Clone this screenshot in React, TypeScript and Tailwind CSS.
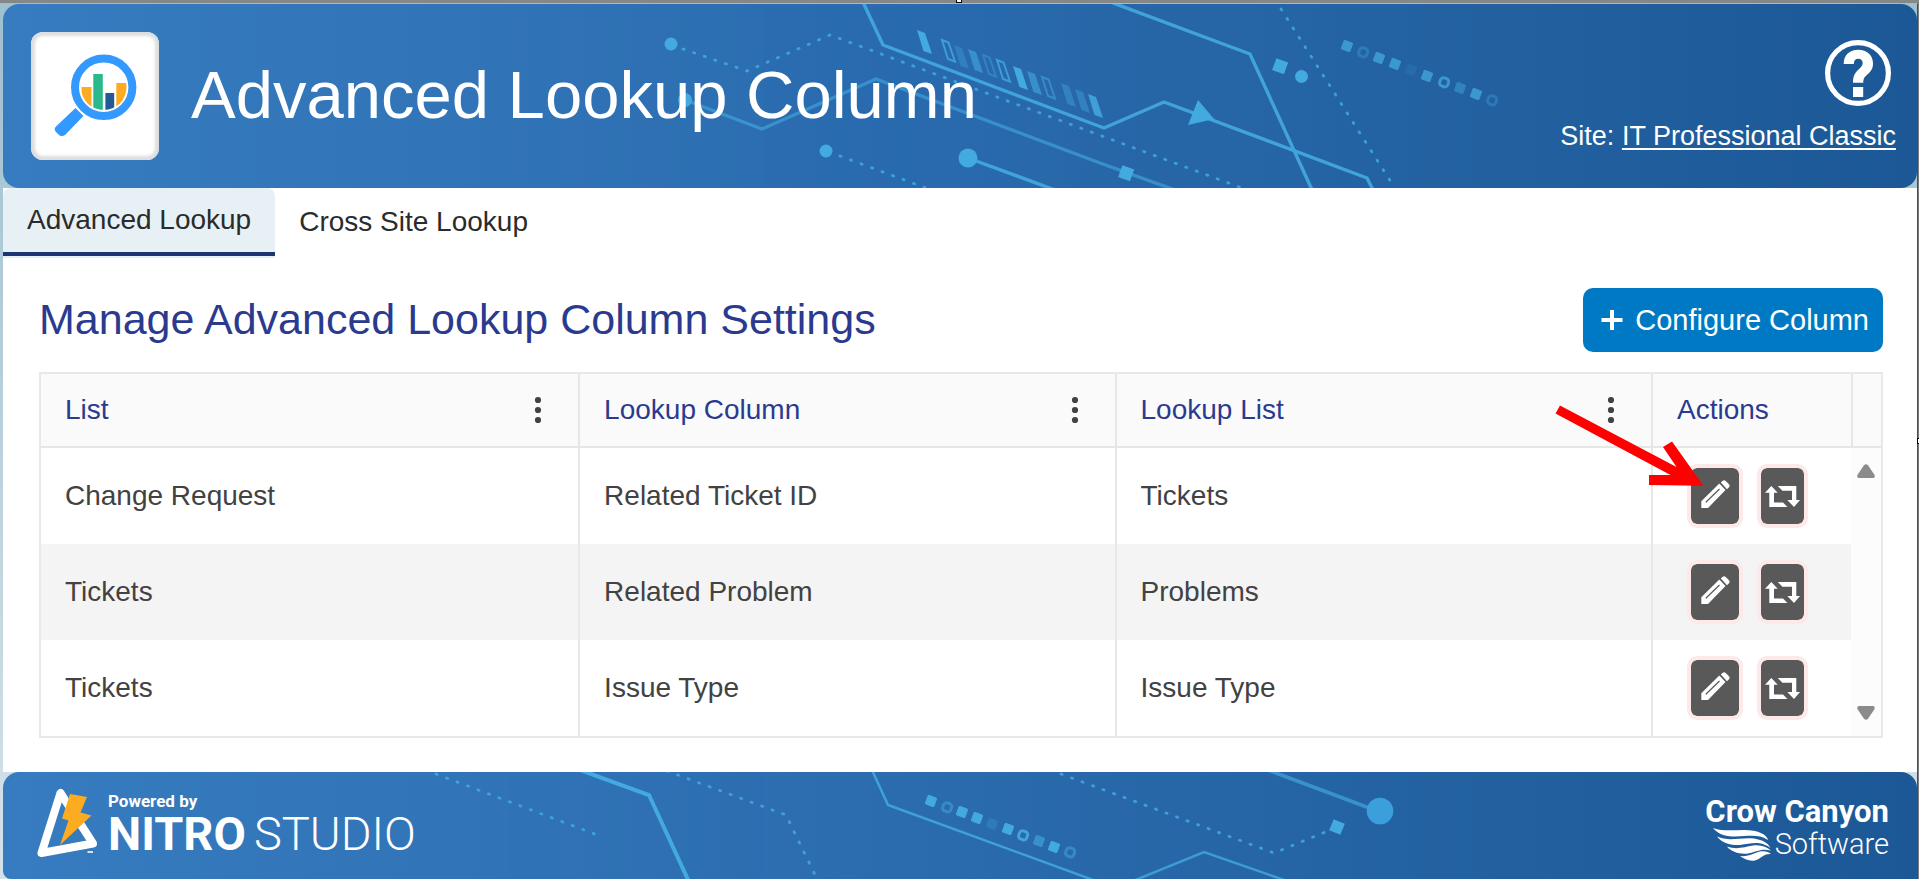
import React from "react";

const CYAN = "#43aadf";

type Mark = { x: number; y: number; hollow?: boolean; opacity: number };

const headerMarks: Mark[] = [
  { x: 1347, y: 46, opacity: 0.75 },
  { x: 1363, y: 52, hollow: true, opacity: 0.35 },
  { x: 1379, y: 58, opacity: 0.75 },
  { x: 1395, y: 64, opacity: 0.75 },
  { x: 1411, y: 70, opacity: 0.12 },
  { x: 1427, y: 76, opacity: 0.75 },
  { x: 1444, y: 82, hollow: true, opacity: 0.75 },
  { x: 1460, y: 88, opacity: 0.45 },
  { x: 1476, y: 94, opacity: 0.75 },
  { x: 1492, y: 100, hollow: true, opacity: 0.35 },
];

const footerMarks: Mark[] = [
  { x: 931, y: 801, opacity: 1 },
  { x: 947, y: 807, hollow: true, opacity: 0.5 },
  { x: 962, y: 812, opacity: 1 },
  { x: 977, y: 818, opacity: 1 },
  { x: 992, y: 824, opacity: 0.25 },
  { x: 1008, y: 829, opacity: 1 },
  { x: 1023, y: 835, hollow: true, opacity: 0.9 },
  { x: 1039, y: 841, opacity: 0.6 },
  { x: 1054, y: 847, opacity: 1 },
  { x: 1070, y: 852, hollow: true, opacity: 0.5 },
];

const slats: Mark[] = [
  { x: 917, y: 30, opacity: 1 },
  { x: 942, y: 40, hollow: true, opacity: 0.8 },
  { x: 954, y: 45, opacity: 0.35 },
  { x: 968, y: 49, opacity: 0.6 },
  { x: 983, y: 55, hollow: true, opacity: 0.4 },
  { x: 997, y: 60, hollow: true, opacity: 0.8 },
  { x: 1013, y: 66, opacity: 1 },
  { x: 1027, y: 71, opacity: 0.6 },
  { x: 1042, y: 77, hollow: true, opacity: 0.55 },
  { x: 1061, y: 83, opacity: 0.4 },
  { x: 1075, y: 89, opacity: 0.4 },
  { x: 1088, y: 94, opacity: 0.85 },
];

function Marks({ marks }: { marks: Mark[] }) {
  return (
    <>
      {marks.map((m) =>
        m.hollow ? (
          <rect key={m.x} x={m.x - 4} y={m.y - 4} width="8.5" height="8.5" rx="3" fill="none" stroke={CYAN} strokeWidth="3" opacity={m.opacity} transform={`rotate(20 ${m.x} ${m.y})`} />
        ) : (
          <rect key={m.x} x={m.x - 4.5} y={m.y - 4.5} width="9" height="9" rx="1" fill={CYAN} opacity={m.opacity} transform={`rotate(20 ${m.x} ${m.y})`} />
        )
      )}
    </>
  );
}

function HeaderArt() {
  return (
    <svg className="absolute inset-0 h-full w-full" viewBox="3 4 1914 184" preserveAspectRatio="xMidYMid slice" aria-hidden="true" fill="none" stroke={CYAN}>
      <g strokeWidth="2.8" strokeDasharray="1.2 10" strokeLinecap="round" opacity="0.85">
        <path d="M683 49 L747 71 L830 35 L1242 188" />
        <path d="M840 156 L926 188" />
        <path d="M1281 9 L1391 182" />
      </g>
      <g strokeWidth="3.4" opacity="0.92">
        <path d="M862 0 L883 45 L1104 128 L1164 102 L1367 178 L1373 190" />
        <path d="M1105 0 L1250 54 L1313 192" />
        <path d="M968 158 L1055 190" />
        <path d="M685 100 L762 129 L876 79 L1100 163 L1175 190" opacity="0.65" />
      </g>
      <g fill={CYAN} stroke="none">
        <circle cx="671" cy="44" r="6.5" />
        <circle cx="685" cy="100" r="7" />
        <circle cx="826" cy="151" r="6.5" />
        <circle cx="968" cy="158" r="9.5" />
        <circle cx="1301.5" cy="76.5" r="6.5" />
        <path d="M1198 100 L1214 119 L1188 125 Z" />
        <rect x="1274" y="60" width="12.5" height="12.5" transform="rotate(20 1280 66)" />
        <rect x="1120" y="167" width="12.5" height="12.5" transform="rotate(20 1126 173)" />
        {slats.map((s) =>
          s.hollow ? (
            <path key={s.x} d={`M${s.x} ${s.y} l6.500 2.500 l6.500 19 l-7 -2.500 Z`} opacity={s.opacity} fill="none" stroke={CYAN} strokeWidth="2" />
          ) : (
            <path key={s.x} d={`M${s.x} ${s.y} l8 3 l7 21 l-8.500 -3 Z`} opacity={s.opacity} />
          )
        )}
      </g>
      <Marks marks={headerMarks} />
    </svg>
  );
}

function FooterArt() {
  return (
    <svg className="absolute inset-0 h-full w-full" viewBox="3 772 1914 107" preserveAspectRatio="xMidYMid slice" aria-hidden="true" fill="none" stroke={CYAN}>
      <g strokeWidth="2.8" strokeDasharray="1.2 10" strokeLinecap="round" opacity="0.85">
        <path d="M436 774 L600 836" />
        <path d="M667 771 L786 815 L818 881" />
        <path d="M1061 774 L1274 853 L1330 830" />
      </g>
      <path d="M580 770 L649 795 L690 884" strokeWidth="4" />
      <path d="M872 770 L888 805 L1096 881" strokeWidth="2.5" opacity="0.85" />
      <path d="M1133 881 L1204 852 L1287 881" strokeWidth="2.5" opacity="0.8" />
      <path d="M1268 770 L1380 812" strokeWidth="3.8" opacity="0.65" />
      <circle cx="1380" cy="811" r="13.3" fill="#3b9fdb" stroke="none" />
      <rect x="1331" y="821" width="12" height="12" fill={CYAN} stroke="none" transform="rotate(22 1337 827)" />
      <Marks marks={footerMarks} />
    </svg>
  );
}

function MagnifierIcon() {
  return (
    <svg className="size-32" viewBox="31 32 128 128" aria-hidden="true">
      <defs>
        <clipPath id="lens">
          <circle cx="103.7" cy="87.3" r="22.8" />
        </clipPath>
      </defs>
      <g clipPath="url(#lens)">
        <rect x="81.5" y="87" width="10" height="24" fill="#fdab20" />
        <rect x="93.3" y="74" width="9.500" height="40" fill="#2bb88c" />
        <rect x="105.4" y="93" width="8.800" height="20" fill="#225a97" />
        <rect x="116.3" y="83" width="11" height="28" fill="#fdab20" />
      </g>
      <circle cx="103.7" cy="87.3" r="28.7" fill="none" stroke="#3399ff" strokeWidth="8" />
      <path d="M75.500 108 L83.500 116 L65.500 134.500 Q64 136 61.500 136 Q60 136 58.500 134.500 L56 132 Q54.500 130.500 54.700 128.500 Q54.800 127.500 56.500 126 Z" fill="#3399ff" />
    </svg>
  );
}

function HelpIcon() {
  return (
    <svg className="size-[66px]" viewBox="0 0 66 66" fill="none" aria-hidden="true">
      <circle cx="33" cy="33" r="30.400" stroke="#fff" strokeWidth="5.200" />
      <path
        d="M18.700 24 C18.700 15 24.500 9.700 33.200 9.700 C42 9.700 48 15 48 23.500 C48 29 45.500 31.800 42.300 34.500 C39.500 37 38.300 38.500 38.300 42.700 H28 C28 36.500 29.500 33.500 33 30 C35.800 27.300 37.700 26 37.700 23 C37.700 20.300 36 18.700 33.300 18.700 C30.500 18.700 28.800 20.500 28.800 24 Z"
        fill="#fff"
      />
      <rect x="28" y="47" width="10.200" height="10" fill="#fff" />
    </svg>
  );
}

function PencilIcon() {
  return (
    <svg className="h-7 w-[29px]" viewBox="0 0 29 28" aria-hidden="true">
      <path d="M0.300 28 V21.200 L18.300 3.500 L24.500 10 L7 28 Z" fill="#fff" />
      <path d="M19.800 2.500 L21.800 0.700 Q23 -0.300 24.500 0.700 L28 4.300 Q29.200 6 28 7.200 L26 9.200 Z" fill="#fff" />
      <path d="M4.800 22.300 L18.500 9" stroke="#595959" strokeWidth="1.200" />
    </svg>
  );
}

function LoopIcon() {
  return (
    <svg className="h-[21px] w-[35px] shrink-0" viewBox="0 0 35 21" fill="#fff" aria-hidden="true">
      <path d="M6.300 0 L12.700 6.700 H9 V16.500 H18 L22.500 21 H4.300 V6.700 H0 Z" />
      <path d="M12.700 0 H31.300 V14 H35 L29 21 L22.300 14 H27 V4.700 H17.500 Z" />
    </svg>
  );
}

function NitroMark() {
  return (
    <svg className="h-[70px] w-[62px]" viewBox="36 787 62 70" aria-hidden="true">
      <path d="M60.500 793 L41.500 853 L93 843.500 Z" fill="none" stroke="#fff" strokeWidth="8" strokeLinejoin="round" />
      <path d="M70 794 L87 797 L80.500 812.500 L91.500 815.500 L60 845 L68.500 820.500 L62 818.500 Z" fill="#fdab20" />
      <path d="M87.500 852 h5.500" stroke="#fff" strokeWidth="2" opacity="0.8" />
    </svg>
  );
}

function WingMark() {
  return (
    <svg className="h-[34px] w-[58px]" viewBox="0 0 58 34" fill="#fff" aria-hidden="true">
      <path d="M0 0 C14 5 28 0 42 3 C50 5 54 8 55 12 C44 5 33 9 20 8.500 C10 8 4 5 0 0 Z" />
      <path d="M4 8.500 C16 14 28 9 41 10.500 C50 12 55 15 57.500 20 C46 12 38 16 27 17 C16 17.500 8 14 4 8.500 Z" />
      <path d="M14 18.500 C24 22 31 19 40 17.500 C48 16.500 54 19 58 22.500 C48 20 43 24 35 25.500 C27 26.500 18 24 14 18.500 Z" />
      <path d="M27 28 C36 29 41 25 47 23.500 C52 22.500 56 24 58 26 C50 25.500 48 31 42 32.500 C36 33.500 31 31 27 28 Z" />
    </svg>
  );
}

const columns = ["List", "Lookup Column", "Lookup List"];
const rows = [
  ["Change Request", "Related Ticket ID", "Tickets"],
  ["Tickets", "Related Problem", "Problems"],
  ["Tickets", "Issue Type", "Issue Type"],
];

export default function App() {
  return (
    <div className="relative min-h-screen border-t-[3px] border-r border-t-[#868888] border-r-[#7d7d7d] bg-linear-to-b from-[#9fc0d0] to-[#d5e2ea] font-['Liberation_Sans',Arial,sans-serif] text-[28px] leading-8 text-[#424242]">
      <div className="border-r border-t border-r-[#4c4c4c] border-t-[#a5bcc8] pl-[3px]">
        <header className="relative flex h-[184px] items-center justify-between overflow-hidden rounded-2xl bg-linear-to-r from-[#377cc0] via-[#2a6bad] to-[#1c5896] pl-7 pr-[21px] text-white">
          <HeaderArt />
          <div className="relative flex items-center gap-8">
            <div className="rounded-xl bg-white shadow-[inset_0_0_3px_4px_#dcdedf]">
              <MagnifierIcon />
            </div>
            <h1 className="whitespace-nowrap pb-1 text-[67px] leading-none">Advanced Lookup Column</h1>
          </div>
          <div className="relative flex flex-col items-end gap-3.5 self-start pt-9 text-[27px]">
            <button type="button" aria-label="Help" className="mr-[5px]">
              <HelpIcon />
            </button>
            <p className="whitespace-nowrap">
              Site:{" "}
              <a href="#site" className="underline decoration-2 underline-offset-3">
                IT Professional Classic
              </a>
            </p>
          </div>
        </header>

        <div className="bg-white">
          <nav className="flex items-start text-[#2b2b2b]">
            <a href="#advanced" aria-current="page" className="rounded-t-lg border-b-2 border-[#e7f0f5] bg-[#e7f0f5]">
              <span className="block border-b-4 border-[#1d3573] px-6 py-4">Advanced Lookup</span>
            </a>
            <a href="#cross-site" className="px-6 pt-[18px]">
              Cross Site Lookup
            </a>
          </nav>

          <main className="pb-[34px] pl-9 pr-[34px] pt-[30px]">
            <div className="flex items-center justify-between pb-5">
              <h2 className="pb-0.5 text-[43px] leading-none text-[#2a3b8f]">Manage Advanced Lookup Column Settings</h2>
              <button type="button" className="flex h-16 items-center gap-3 whitespace-nowrap rounded-[10px] bg-[#0079c4] pl-[18px] pr-3.5 text-[29px] text-white">
                <svg className="size-[22px]" viewBox="0 0 22 22" stroke="#fff" strokeWidth="4" aria-hidden="true">
                  <path d="M0.500 11 H21.500 M11 1 V21" />
                </svg>
                Configure Column
              </button>
            </div>

            <div className="border-2 border-[#e8e8e8]">
              <table className="w-full table-fixed border-separate border-spacing-0 text-left">
                <colgroup>
                  <col className="w-[29.3%]" />
                  <col />
                  <col />
                  <col className="w-[200px]" />
                  <col className="w-7" />
                </colgroup>
                <thead className="bg-[#fafafa] text-[#2a3b8f]">
                  <tr className="h-[74px]">
                    {columns.map((c) => (
                      <th key={c} scope="col" className="border-b-2 border-r-2 border-[#e6e6e6] p-0 pl-6 pr-[34px] font-normal">
                        <div className="flex items-center justify-between">
                          {c}
                          <button type="button" aria-label={`${c} column menu`}>
                            <svg className="h-7 w-3" viewBox="0 0 12 28" fill="#424242" aria-hidden="true">
                              <circle cx="6" cy="4" r="3.100" />
                              <circle cx="6" cy="14" r="3.100" />
                              <circle cx="6" cy="24" r="3.100" />
                            </svg>
                          </button>
                        </div>
                      </th>
                    ))}
                    <th scope="col" className="border-b-2 border-r-2 border-[#e6e6e6] p-0 pl-6 font-normal">
                      Actions
                    </th>
                    <td className="border-b-2 border-[#e6e6e6] p-0" />
                  </tr>
                </thead>
                <tbody>
                  {rows.map((row, i) => (
                    <tr key={i} className={i % 2 ? "h-24 bg-[#f4f4f4]" : "h-24 bg-white"}>
                      {row.map((cell, j) => (
                        <td key={j} className="border-r-2 border-[#e8e8e8] p-0 pl-6">
                          {cell}
                        </td>
                      ))}
                      <td className="relative border-r-2 border-[#fcfcfc] p-0 pl-[34px]">
                        <div className="flex gap-3.5">
                          <button type="button" aria-label="Edit" className="flex h-16 w-14 items-center justify-center rounded-[10px] border-4 border-[#fde9e7] bg-[#595959] bg-clip-padding pb-1">
                            <PencilIcon />
                          </button>
                          <button type="button" aria-label="Sync" className="flex h-16 w-[51px] items-center justify-center rounded-[10px] border-4 border-[#fde9e7] bg-[#595959] bg-clip-padding">
                            <LoopIcon />
                          </button>
                        </div>
                        {i === 0 && (
                          <svg className="pointer-events-none absolute -left-[100px] -top-[45px] z-10 h-[85px] w-[152px]" viewBox="1553 403 152 85" fill="#ff0000" aria-hidden="true">
                            <path d="M1560 405.500 L1676.500 467 L1663 447 L1672 441.500 L1703.500 485.700 L1649 485 V475 H1670.500 L1555.500 413.500 Z" />
                          </svg>
                        )}
                      </td>
                      {i === 0 && (
                        <td rowSpan={3} className="bg-[#fcfcfc] p-0">
                          <div className="flex h-[288px] flex-col items-center justify-between py-4 pr-0.5">
                            <button type="button" aria-label="Scroll up">
                              <svg className="h-3.5 w-[18px]" viewBox="0 0 18 14" fill="#8b8b8b" aria-hidden="true">
                                <path d="M7 1.200 Q9 -0.800 11 1.200 L17.600 11 Q18.200 14 16 14 H2 Q-0.200 14 0.400 11 Z" />
                              </svg>
                            </button>
                            <button type="button" aria-label="Scroll down">
                              <svg className="h-3.5 w-[18px]" viewBox="0 0 18 14" fill="#8b8b8b" aria-hidden="true">
                                <path d="M7 12.800 Q9 14.800 11 12.800 L17.600 3 Q18.200 0 16 0 H2 Q-0.200 0 0.400 3 Z" />
                              </svg>
                            </button>
                          </div>
                        </td>
                      )}
                    </tr>
                  ))}
                </tbody>
              </table>
            </div>
          </main>
        </div>

        <footer className="relative flex h-[107px] items-start justify-between overflow-hidden rounded-t-2xl rounded-bl-lg bg-linear-to-r from-[#377cc0] via-[#2a6bad] to-[#1c5896] pl-[33px] pr-7 font-['Roboto',sans-serif] text-white">
          <FooterArt />
          <div className="relative flex gap-2.5 pt-[15px]">
            <NitroMark />
            <div>
              <p className="pt-1 text-[17px] leading-5 font-bold">Powered by</p>
              <p className="flex gap-2 whitespace-nowrap text-[47px] leading-[46px]">
                <span className="font-bold">NITRO</span>
                <span className="font-light">STUDIO</span>
              </p>
            </div>
          </div>
          <div className="relative flex flex-col items-end pt-6">
            <p className="whitespace-nowrap text-[31px] leading-8 font-bold">Crow Canyon</p>
            <div className="flex gap-1">
              <WingMark />
              <p className="text-[29px] leading-8 font-light">Software</p>
            </div>
          </div>
        </footer>
      </div>

      <span className="absolute -top-[3px] left-1/2 h-[3px] w-1.5 -translate-x-1/2 border-x border-b border-black bg-white" />
      <span className="absolute -right-px top-1/2 h-1.5 w-0.5 -translate-y-1/2 border-y border-l border-black bg-white" />
    </div>
  );
}
